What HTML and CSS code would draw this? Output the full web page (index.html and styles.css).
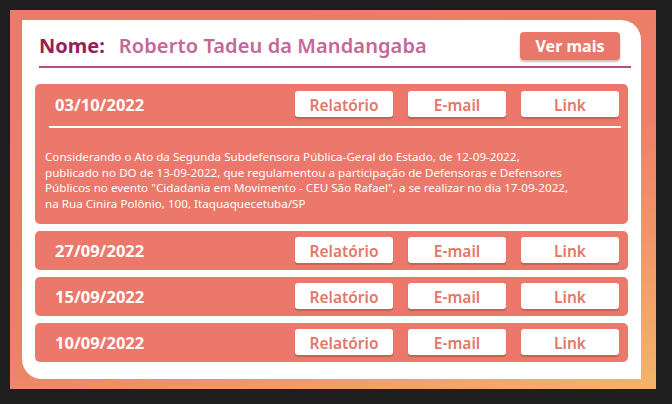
FILE: index.html
```html
<!DOCTYPE html>
<html lang="pt-BR">
<head>
<meta charset="utf-8">
<title>Registros</title>
<link rel="stylesheet" href="styles.css">
</head>
<body>
<div class="frame">
  <div class="card">
    <header class="head">
      <h1 class="title"><span class="label">Nome:</span><span class="name">Roberto Tadeu da Mandangaba</span></h1>
      <button class="more">Ver mais</button>
    </header>
    <div class="rule"></div>
    <ul class="list">
      <li class="item open">
        <div class="row">
          <span class="date">03/10/2022</span>
          <div class="actions">
            <button class="btn">Relatório</button>
            <button class="btn">E-mail</button>
            <button class="btn">Link</button>
          </div>
        </div>
        <div class="divider"></div>
        <p class="desc">Considerando o Ato da Segunda Subdefensora Pública-Geral do Estado, de 12-09-2022,<br>publicado no DO de 13-09-2022, que regulamentou a participação de Defensoras e Defensores<br>Públicos no evento "Cidadania em Movimento - CEU São Rafael", a se realizar no dia 17-09-2022,<br>na Rua Cinira Polônio, 100, Itaquaquecetuba/SP</p>
      </li>
      <li class="item">
        <div class="row">
          <span class="date">27/09/2022</span>
          <div class="actions">
            <button class="btn">Relatório</button>
            <button class="btn">E-mail</button>
            <button class="btn">Link</button>
          </div>
        </div>
      </li>
      <li class="item">
        <div class="row">
          <span class="date">15/09/2022</span>
          <div class="actions">
            <button class="btn">Relatório</button>
            <button class="btn">E-mail</button>
            <button class="btn">Link</button>
          </div>
        </div>
      </li>
      <li class="item">
        <div class="row">
          <span class="date">10/09/2022</span>
          <div class="actions">
            <button class="btn">Relatório</button>
            <button class="btn">E-mail</button>
            <button class="btn">Link</button>
          </div>
        </div>
      </li>
    </ul>
  </div>
</div>
</body>
</html>
```

FILE: styles.css
```css
* { box-sizing: border-box; }
html, body { margin: 0; padding: 0; }
body {
  background: #1e1e1e;
  font-family: "Noto Sans", "Open Sans", sans-serif;
  width: 672px;
  height: 404px;
  overflow: hidden;
}
.frame {
  margin: 10px 0 0 10px;
  width: 646px;
  height: 379px;
  padding: 10px 15px 10px 12px;
  background: linear-gradient(160deg, #ea7a6a 0%, #ec8068 55%, #f4b46a 100%);
}
.card {
  background: #ffffff;
  height: 359px;
  border-radius: 0 20px 0 20px;
  padding-top: 12px;
}
.head {
  display: flex;
  align-items: center;
  justify-content: space-between;
  padding: 0 21px 0 17px;
  height: 28px;
}
.title {
  margin: 0;
  font-size: 20px;
  font-weight: 600;
  display: flex;
  gap: 14px;
  line-height: 28px;
}
.label { color: #9a1c58; font-weight: 700; }
.name { color: #c46798; font-weight: 600; letter-spacing: 0.1px; }
.more {
  width: 100px;
  height: 28px;
  border: none;
  border-radius: 4px;
  background: #ea786a;
  color: #fff;
  font-family: inherit;
  font-size: 16px;
  font-weight: 700;
  box-shadow: 0 2px 2px rgba(150, 60, 50, 0.35);
  padding: 0;
}
.rule {
  height: 2px;
  background: #b34f86;
  margin: 6px 10px 0 17px;
}
.list {
  list-style: none;
  margin: 16px 0 0;
  padding: 0 13px;
  display: flex;
  flex-direction: column;
  gap: 7px;
}
.item {
  background: #eb786a;
  border-radius: 5px;
  padding: 6px 9px 7px 20px;
}
.open { padding-bottom: 13px; padding-top: 7px; }
.row {
  display: flex;
  align-items: center;
  justify-content: space-between;
}
.date {
  color: #fff;
  font-size: 16.5px;
  font-weight: 700;
}
.actions {
  display: flex;
  gap: 15px;
}
.btn {
  width: 98px;
  height: 26px;
  border: none;
  border-radius: 3px;
  background: #fff;
  color: #e2786a;
  font-family: inherit;
  font-size: 15.5px;
  font-weight: 600;
  padding: 1px 0 0;
  box-shadow: 0 2px 1px #c95f54;
}
.divider {
  height: 2px;
  background: #fff;
  margin: 9px -2px 0 -6px;
}
.desc {
  margin: 21px 0 0 -10px;
  color: #fff;
  font-size: 11.65px;
  line-height: 15.5px;
  white-space: nowrap;
}
```
